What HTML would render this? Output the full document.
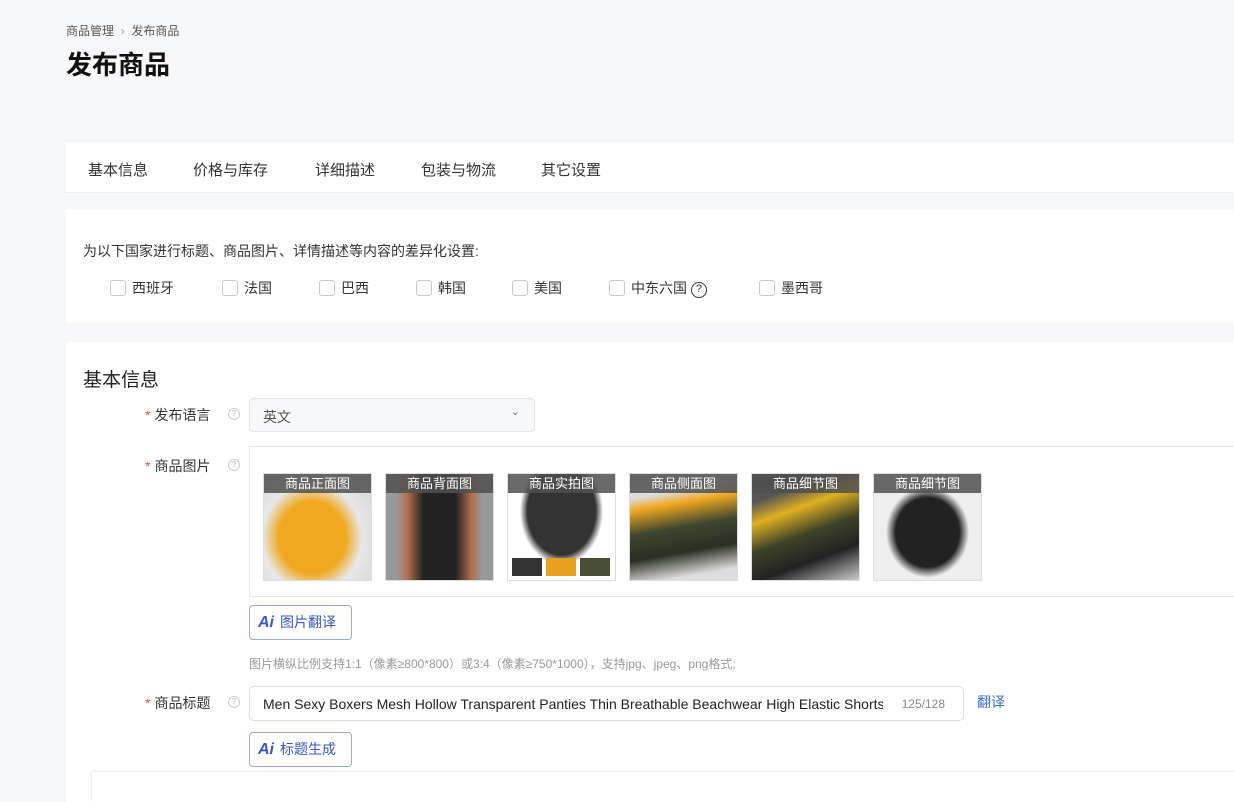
<!DOCTYPE html><html><head><meta charset="utf-8"><style>
*{margin:0;padding:0;box-sizing:border-box}
body{width:1234px;height:793px;background:#f7f8fa;font-family:"Liberation Sans","Noto Sans CJK SC",sans-serif;color:#333;position:relative;overflow:hidden;font-size:14px}
.a{position:absolute}
.card{position:absolute;left:66px;right:0;background:#fff}
.cb{display:inline-block;width:16px;height:16px;border:1px solid #c8c8c8;border-radius:3px;vertical-align:-3px;margin-right:6px}
.lbl{position:absolute;font-size:14px;color:#333}
.lbl b{color:#e34d3a;font-weight:normal;margin-right:4px}
.q{position:absolute;width:12px;height:12px;border:1px solid #ccc;border-radius:50%;font-size:8px;color:#bbb;text-align:center;line-height:10px}
.img{position:absolute;top:473px;width:109px;height:108px;border:1px solid #ddd;overflow:hidden}
.img span{position:absolute;left:0;right:0;top:0;height:19px;background:rgba(80,80,80,.85);color:#fff;font-size:13px;text-align:center;line-height:19px}
.ai{position:absolute;left:249px;width:103px;height:35px;border:1px solid #9aa8e6;border-radius:4px;color:#3a56c9;font-size:14px;line-height:33px;padding-left:8px}
.ai i{font-style:italic;font-weight:bold;font-size:16px;margin-right:6px}
.tab{position:absolute;top:16px;font-size:15px;color:#333}
</style></head><body>
<div class="a" style="left:66px;top:22px;font-size:12px;color:#555">商品管理 &nbsp;<span style="color:#999">›</span>&nbsp; 发布商品</div>
<div class="a" style="left:66px;top:45px;font-size:26px;font-weight:bold;color:#111">发布商品</div>
<div class="card" style="top:143px;height:50px;border-bottom:1px solid #eee">
<span class="tab" style="left:22px">基本信息</span><span class="tab" style="left:127px">价格与库存</span><span class="tab" style="left:249px">详细描述</span><span class="tab" style="left:355px">包装与物流</span><span class="tab" style="left:475px">其它设置</span></div>
<div class="card" style="top:209px;height:114px">
<div class="a" style="left:17px;top:32px;font-size:14px">为以下国家进行标题、商品图片、详情描述等内容的差异化设置:</div>
<div class="a" style="left:44px;top:69px;font-size:14px;white-space:nowrap">
<span style="position:absolute;left:0"><i class="cb"></i>西班牙</span>
<span style="position:absolute;left:112px"><i class="cb"></i>法国</span>
<span style="position:absolute;left:209px"><i class="cb"></i>巴西</span>
<span style="position:absolute;left:306px"><i class="cb"></i>韩国</span>
<span style="position:absolute;left:402px"><i class="cb"></i>美国</span>
<span style="position:absolute;left:499px"><i class="cb"></i>中东六国 <span style="display:inline-block;width:16px;height:16px;border:1.5px solid #333;border-radius:50%;font-size:11px;text-align:center;line-height:13px;vertical-align:1px">?</span></span>
<span style="position:absolute;left:649px"><i class="cb"></i>墨西哥</span></div></div>
<div class="card" style="top:342px;height:460px"></div>
<div class="a" style="left:83px;top:365px;font-size:19px;color:#222">基本信息</div>
<div class="lbl" style="left:145px;top:405px"><b>*</b>发布语言</div><div class="q" style="left:228px;top:408px">?</div>
<div class="a" style="left:249px;top:398px;width:286px;height:34px;border:1px solid #e3e3e3;border-radius:5px;background:#f7f8fa;padding:8px 13px;color:#555">英文<span style="position:absolute;right:14px;top:6px;font-size:11px;color:#777">⌄</span></div>
<div class="lbl" style="left:145px;top:456px"><b>*</b>商品图片</div><div class="q" style="left:228px;top:459px">?</div>
<div class="a" style="left:249px;top:446px;width:990px;height:151px;border:1px solid #e6e6e6"></div>
<div class="img" style="left:263px;background:radial-gradient(ellipse at 45% 60%,#f0a820 0 40%,#e8e8e8 60%,#d0d0d0)"><span>商品正面图</span></div>
<div class="img" style="left:385px;background:linear-gradient(90deg,#999 0 10%,#b07050 20%,#222 35% 65%,#b07050 80%,#999 90%)"><span>商品背面图</span></div>
<div class="img" style="left:507px;background:radial-gradient(ellipse at 50% 35%,#333 0 45%,#fff 55%)"><span>商品实拍图</span><div style="position:absolute;bottom:4px;left:4px;width:30px;height:18px;background:#333"></div><div style="position:absolute;bottom:4px;left:38px;width:30px;height:18px;background:#e8a020"></div><div style="position:absolute;bottom:4px;left:72px;width:30px;height:18px;background:#4a5038"></div></div>
<div class="img" style="left:629px;background:linear-gradient(170deg,#ddd 0 20%,#f0a820 30%,#3d4630 50%,#2a2f22 70%,#ddd 90%)"><span>商品侧面图</span></div>
<div class="img" style="left:751px;background:linear-gradient(160deg,#555 0 20%,#e0b020 35%,#3e4228 55%,#222 75%,#ccc)"><span>商品细节图</span></div>
<div class="img" style="left:873px;background:radial-gradient(ellipse at 50% 55%,#222 0 42%,#eee 55%)"><span>商品细节图</span></div>
<div class="ai" style="top:605px"><i>Ai</i>图片翻译</div>
<div class="a" style="left:249px;top:655px;font-size:12px;color:#999">图片横纵比例支持1:1（像素≥800*800）或3:4（像素≥750*1000），支持jpg、jpeg、png格式;</div>
<div class="lbl" style="left:145px;top:693px"><b>*</b>商品标题</div><div class="q" style="left:228px;top:696px">?</div>
<div class="a" style="left:249px;top:686px;width:715px;height:35px;border:1px solid #ddd;border-radius:5px;padding:9px 13px;white-space:nowrap;overflow:hidden;font-size:14px;color:#222"><span style="display:inline-block;width:620px;overflow:hidden;vertical-align:top">Men Sexy Boxers Mesh Hollow Transparent Panties Thin Breathable Beachwear High Elastic Shorts</span><span style="position:absolute;right:18px;top:10px;font-size:12px;color:#888">125/128</span></div>
<div class="a" style="left:977px;top:692px;color:#3a6fd8;font-size:14px">翻译</div>
<div class="ai" style="top:732px"><i>Ai</i>标题生成</div>
<div class="a" style="left:91px;top:771px;right:0;height:30px;border-top:1px solid #eee;border-left:1px solid #eee;box-shadow:0 -1px 3px rgba(0,0,0,.04)"></div>
</body></html>
